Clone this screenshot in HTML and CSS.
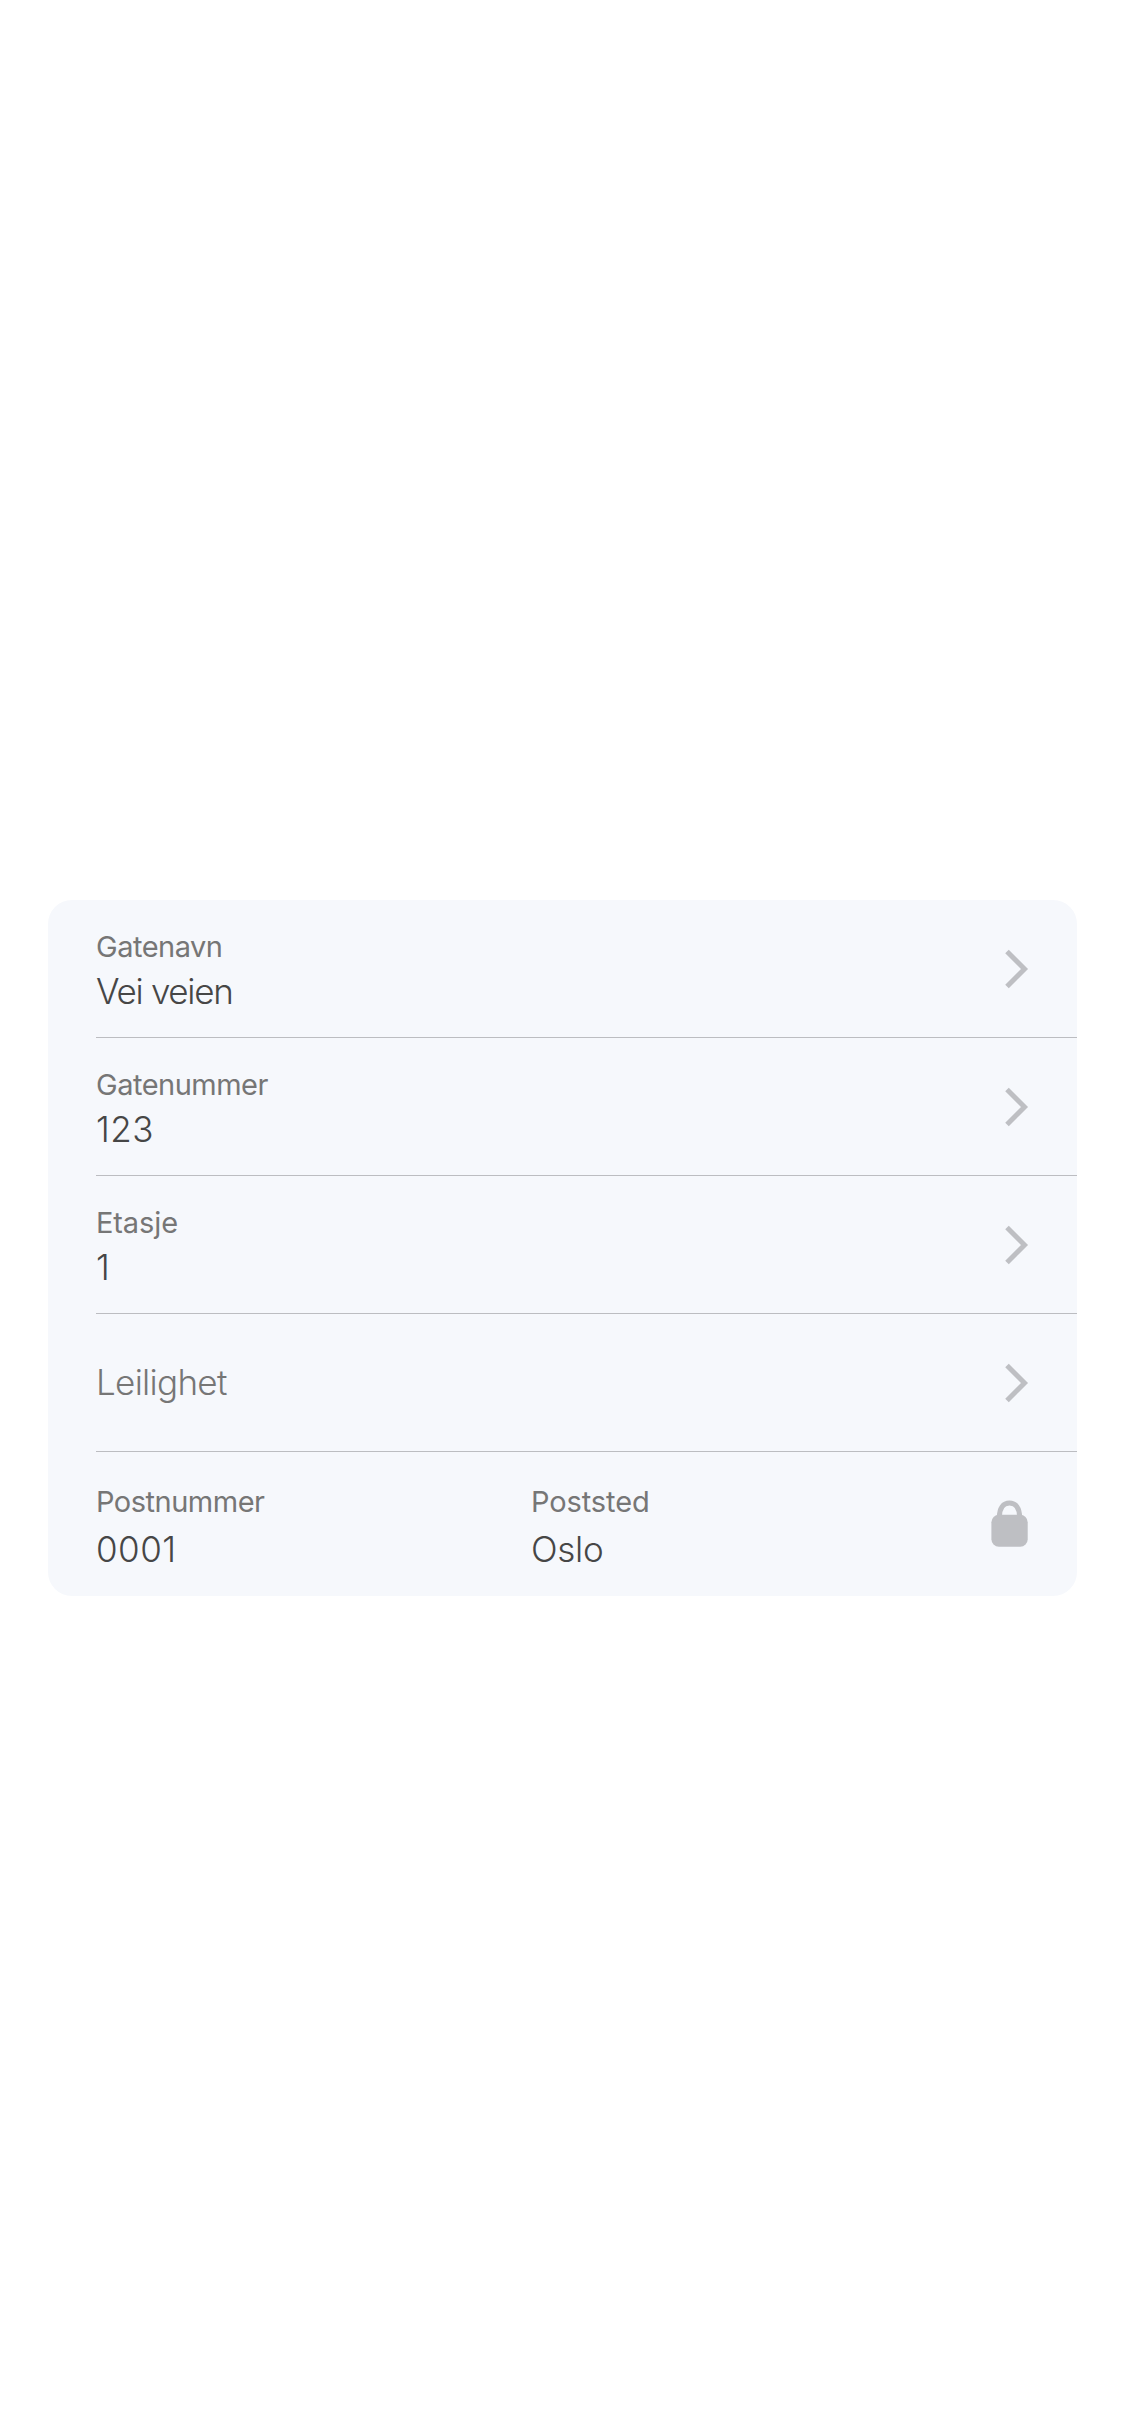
FILE: index.html
```html
<!DOCTYPE html>
<html lang="no">
<head>
<meta charset="utf-8">
<title>Adresse</title>
<link rel="stylesheet" href="styles.css">
</head>
<body>
<main class="card">
  <div class="row">
    <div class="field"><span class="label">Gatenavn</span><span class="value tight">Vei veien</span></div>
    <svg class="chevron" viewBox="0 0 24 42"><path d="M2 3.5 19.5 21 2 38.5"/></svg>
  </div>
  <div class="row">
    <div class="field"><span class="label">Gatenummer</span><span class="value number">123</span></div>
    <svg class="chevron" viewBox="0 0 24 42"><path d="M2 3.5 19.5 21 2 38.5"/></svg>
  </div>
  <div class="row">
    <div class="field"><span class="label short">Etasje</span><span class="value">1</span></div>
    <svg class="chevron" viewBox="0 0 24 42"><path d="M2 3.5 19.5 21 2 38.5"/></svg>
  </div>
  <div class="row">
    <div class="field empty"><span class="value placeholder">Leilighet</span></div>
    <svg class="chevron" viewBox="0 0 24 42"><path d="M2 3.5 19.5 21 2 38.5"/></svg>
  </div>
  <div class="row locked">
    <div class="field"><span class="label">Postnummer</span><span class="value number">0001</span></div>
    <div class="field"><span class="label short">Poststed</span><span class="value town">Oslo</span></div>
    <svg class="lock" viewBox="0 0 38 48"><rect x=".4" y="14.8" width="36.3" height="32" rx="7.5"/><path d="M8.4 17C8.4 8 12.2 3 18.5 3S28.6 8 28.6 17"/></svg>
  </div>
</main>
</body>
</html>
```
FILE: styles.css
```css
body {
  margin: 0;
  padding: 900px 48px 0;
  background: #fff;
  font-family: Inter, "Liberation Sans", sans-serif;
}

.card {
  height: 696px;
  padding-left: 48px;
  border-radius: 24px;
  background: #f6f8fc;
}

.row {
  display: flex;
  justify-content: space-between;
  align-items: center;
  box-sizing: border-box;
  height: 138px;
  padding-right: 48px;
  border-bottom: 1px solid #bcbdc1;
}

.field {
  display: flex;
  flex-direction: column;
  gap: 3px;
  padding-top: 6px;
}

.empty { padding: 0 0 2px; }

.label {
  color: #767676;
  font-size: 29px;
  font-weight: 400;
  line-height: 36px;
  letter-spacing: -0.5px;
}

.value {
  color: #464646;
  font-size: 35px;
  font-weight: 300;
  line-height: 46px;
}

.short { letter-spacing: -0.1px; }
.town { letter-spacing: -0.3px; }
.tight { letter-spacing: -1.3px; }
.number { letter-spacing: 0.5px; }

.placeholder {
  color: #767676;
  letter-spacing: -0.7px;
}

.chevron {
  width: 24px;
  height: 42px;
  fill: none;
  stroke: #bebfc3;
  stroke-width: 5px;
}

.locked {
  display: grid;
  grid-template-columns: 435px 1fr 38px;
  height: 144px;
  border-bottom: 0;
}

.locked .field {
  gap: 6px;
  padding-top: 8px;
}

.lock {
  width: 38px;
  height: 48px;
  fill: #bebfc3;
}

.lock path {
  fill: none;
  stroke: #bebfc3;
  stroke-width: 5px;
}
```
